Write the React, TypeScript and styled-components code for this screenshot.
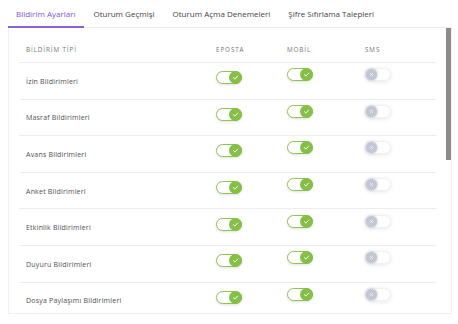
import React, { useState } from 'react';
import styled, { createGlobalStyle } from 'styled-components';

const GlobalStyle = createGlobalStyle`
  html, body {
    margin: 0;
    padding: 0;
    background: #fff;
  }
  body {
    font-family: 'Open Sans', 'DejaVu Sans', sans-serif;
    color: #555;
  }
`;

const Page = styled.div`
  box-sizing: border-box;
  width: 458px;
  height: 324px;
  padding: 0 6px 10px 8px;
  display: flex;
  flex-direction: column;
`;

const Tabs = styled.nav`
  display: flex;
  height: 28px;
  border-bottom: 1px solid #ececec;
  box-sizing: border-box;
`;

const Tab = styled.div<{ $active?: boolean }>`
  padding: 0 9px 0 8px;
  margin-right: 1px;
  display: flex;
  align-items: center;
  font-size: 8px;
  color: ${(p) => (p.$active ? '#7b55c7' : '#444')};
  border-bottom: 2px solid ${(p) => (p.$active ? '#8a63d2' : 'transparent')};
  margin-bottom: -1px;
  white-space: nowrap;
`;

const Card = styled.div`
  position: relative;
  flex: 1;
  border-left: 1px solid #efefef;
  border-right: 1px solid #f2f2f2;
  border-bottom: 1px solid #f0f0f0;
  overflow: hidden;
  padding: 0 15px 0 10px;
`;

// the page's scroll bar, drawn over the card's right edge
const ScrollThumb = styled.div`
  position: absolute;
  top: 0;
  right: 0;
  width: 5px;
  height: 132px;
  background: #8c8c8c;
`;

const Grid = `
  display: grid;
  grid-template-columns: 197px 71px 78px 1fr;
  align-items: center;
  box-sizing: border-box;
  border-bottom: 1px solid #ededed;
`;

const HeadRow = styled.div`
  ${Grid}
  height: 35px;
`;

const HeadCell = styled.div<{ $first?: boolean }>`
  font-size: 6.3px;
  letter-spacing: 0.9px;
  color: #757575;
  padding-left: ${(p) => (p.$first ? '7px' : '0')};
  margin-top: 9px;
`;

const Row = styled.div`
  ${Grid}
  height: 36.6px;
`;

const Label = styled.div`
  font-size: 7px;
  letter-spacing: 0.2px;
  color: #505050;
  padding-left: 7px;
  padding-top: 1px;
`;

const SwitchCell = styled.div<{ $lift: number }>`
  display: flex;
  align-items: center;
  transform: translateY(${(p) => -p.$lift}px);
`;

const Track = styled.button<{ $on: boolean }>`
  position: relative;
  width: 26px;
  height: 13px;
  padding: 0;
  border-radius: 7px;
  border: ${(p) => (p.$on ? '1.5px solid #8fc353' : '1px solid #f1f1f4')};
  background: #fff;
  box-shadow: ${(p) =>
    p.$on ? '0 1px 3px rgba(0,0,0,0.12)' : '0 1px 4px rgba(0,0,0,0.10)'};
  box-sizing: border-box;
  cursor: pointer;
`;

const Knob = styled.span<{ $on: boolean }>`
  position: absolute;
  top: 50%;
  ${(p) => (p.$on ? 'right: -1px;' : 'left: 0px;')}
  width: ${(p) => (p.$on ? '13px' : '11px')};
  height: ${(p) => (p.$on ? '13px' : '11px')};
  margin-top: ${(p) => (p.$on ? '-6.5px' : '-5.5px')};
  border-radius: 50%;
  background: ${(p) => (p.$on ? '#86bf45' : '#c3c7d3')};
  box-shadow: ${(p) => (p.$on ? 'none' : '0 0 3px rgba(150,155,175,0.7)')};
  display: flex;
  align-items: center;
  justify-content: center;
`;

const Toggle = ({ on, onChange }: { on: boolean; onChange: () => void }) => (
  <Track $on={on} onClick={onChange}>
    <Knob $on={on}>
      {on ? (
        <svg width="7" height="7" viewBox="0 0 10 10">
          <path d="M2 5.3 L4.2 7.3 L8 3" fill="none" stroke="#fff" strokeWidth="1.4" strokeLinecap="round" strokeLinejoin="round" />
        </svg>
      ) : (
        <svg width="5" height="5" viewBox="0 0 10 10">
          <path d="M2.5 2.5 L7.5 7.5 M7.5 2.5 L2.5 7.5" fill="none" stroke="#eef0f5" strokeWidth="1.6" strokeLinecap="round" />
        </svg>
      )}
    </Knob>
  </Track>
);

const types = [
  'İzin Bildirimleri',
  'Masraf Bildirimleri',
  'Avans Bildirimleri',
  'Anket Bildirimleri',
  'Etkinlik Bildirimleri',
  'Duyuru Bildirimleri',
  'Dosya Paylaşımı Bildirimleri',
];

type Prefs = { email: boolean; mobile: boolean; sms: boolean };

const App = (): JSX.Element => {
  const [prefs, setPrefs] = useState<Prefs[]>(
    types.map(() => ({ email: true, mobile: true, sms: false }))
  );

  const flip = (i: number, key: keyof Prefs) => {
    setPrefs((prev) => prev.map((p, j) => (j === i ? { ...p, [key]: !p[key] } : p)));
  };

  return (
    <Page>
      <GlobalStyle />
      <Tabs>
        <Tab $active>Bildirim Ayarları</Tab>
        <Tab>Oturum Geçmişi</Tab>
        <Tab>Oturum Açma Denemeleri</Tab>
        <Tab>Şifre Sıfırlama Talepleri</Tab>
      </Tabs>
      <Card>
        <ScrollThumb />
        <HeadRow>
          <HeadCell $first>BİLDİRİM TİPİ</HeadCell>
          <HeadCell>EPOSTA</HeadCell>
          <HeadCell>MOBİL</HeadCell>
          <HeadCell>SMS</HeadCell>
        </HeadRow>
        {types.map((t, i) => (
          <Row key={t}>
            <Label>{t}</Label>
            <SwitchCell $lift={3}>
              <Toggle on={prefs[i].email} onChange={() => flip(i, 'email')} />
            </SwitchCell>
            <SwitchCell $lift={6}>
              <Toggle on={prefs[i].mobile} onChange={() => flip(i, 'mobile')} />
            </SwitchCell>
            <SwitchCell $lift={6}>
              <Toggle on={prefs[i].sms} onChange={() => flip(i, 'sms')} />
            </SwitchCell>
          </Row>
        ))}
      </Card>
    </Page>
  );
};

export default App;
